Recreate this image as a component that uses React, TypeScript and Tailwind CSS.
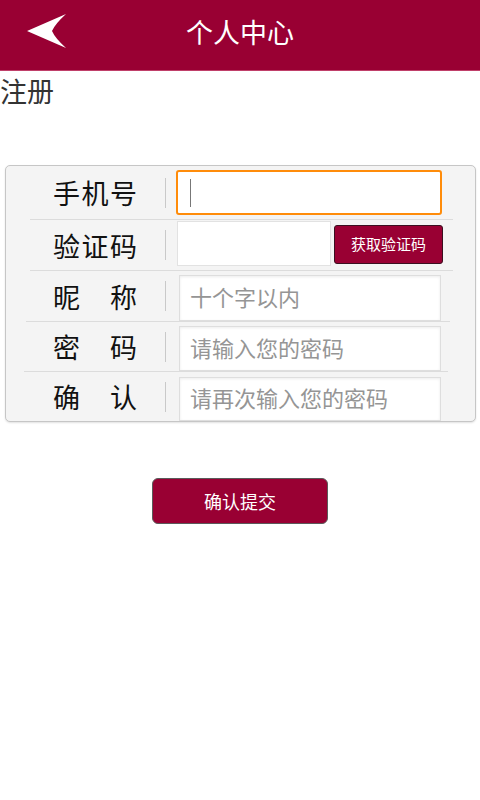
import React from 'react';

const font = { fontFamily: '"Noto Sans CJK SC", "Noto Sans", sans-serif' };

const Label: React.FC<{ chars: string[] }> = ({ chars }) => (
  <div className="w-[159px] h-full flex items-center pl-[47px] shrink-0">
    <div className="w-[84px] flex justify-between text-[27px] leading-none text-[#111]">
      {chars.map((c, i) => (
        <span key={i}>{c}</span>
      ))}
    </div>
  </div>
);

const Sep: React.FC = () => <div className="w-px h-[30px] bg-[#c9c9c9] shrink-0" />;

const Divider: React.FC<{ left: string; right: string }> = ({ left, right }) => (
  <div className={`h-px bg-[#dcdcdc] ${left} ${right}`} />
);

const TextBox: React.FC<{ placeholder: string; h: string }> = ({ placeholder, h }) => (
  <div
    className={`ml-[13px] w-[262px] ${h} bg-white border border-[#dedede] shadow-[inset_0_1px_3px_rgba(0,0,0,0.08)] flex items-center pl-[10px] pb-[3px] text-[22px] text-[#959595]`}
  >
    {placeholder}
  </div>
);

export default function App() {
  return (
    <div className="w-[480px] h-[800px] bg-white" style={font}>
      <header className="h-[71px] bg-[#990033] border-b border-[#c0406a] relative flex items-center justify-center">
        <svg className="absolute left-[27px] top-[14px]" width="40" height="35" viewBox="0 0 40 35">
          <path d="M0 17 L39 0 Q28 10 25 17 Q28 24 39 34 Z" fill="#fff" />
        </svg>
        <h1 className="text-white text-[27px] leading-none -mt-[8px]">个人中心</h1>
      </header>

      <div className="text-[27px] leading-[38px] text-[#333] pt-[1px]">注册</div>

      <div className="mt-[55px] mx-[5px] w-[471px] border border-[#c6c6c6] rounded-[5px] bg-[#f4f4f4] shadow-[0_1px_2px_rgba(0,0,0,0.12)] overflow-hidden">
        <div className="h-[53px] flex items-center">
          <Label chars={['手', '机', '号']} />
          <Sep />
          <div className="ml-[10px] w-[266px] h-[45px] bg-white border-2 border-[#ff8c0a] rounded-[3px] flex items-center pl-[12px]">
            <div className="w-px h-[28px] bg-[#777]" />
          </div>
        </div>
        <Divider left="ml-[24px]" right="mr-[22px]" />
        <div className="h-[50px] flex items-center">
          <Label chars={['验', '证', '码']} />
          <Sep />
          <div className="ml-[11px] w-[154px] h-[45px] -mt-[3px] bg-white border border-[#e2e2e2]" />
          <button className="ml-[3px] w-[109px] h-[39px] -mt-[2px] bg-[#990033] border border-[#3a1020] rounded-[3px] text-white text-[15px]">
            获取验证码
          </button>
        </div>
        <Divider left="ml-[24px]" right="mr-[22px]" />
        <div className="h-[50px] flex items-end">
          <div className="h-full flex items-center">
            <Label chars={['昵', '称']} />
            <Sep />
          </div>
          <TextBox placeholder="十个字以内" h="h-[46px]" />
        </div>
        <Divider left="ml-[20px]" right="mr-[25px]" />
        <div className="h-[49px] flex items-end">
          <div className="h-full flex items-center">
            <Label chars={['密', '码']} />
            <Sep />
          </div>
          <TextBox placeholder="请输入您的密码" h="h-[45px]" />
        </div>
        <Divider left="ml-[18px]" right="mr-[27px]" />
        <div className="h-[49px] flex items-end">
          <div className="h-full flex items-center">
            <Label chars={['确', '认']} />
            <Sep />
          </div>
          <TextBox placeholder="请再次输入您的密码" h="h-[44px]" />
        </div>
      </div>

      <div className="flex justify-center mt-[56px]">
        <button className="w-[176px] h-[46px] bg-[#990033] border border-[#5a5a5a] rounded-[6px] text-white text-[18px]">
          确认提交
        </button>
      </div>
    </div>
  );
}
